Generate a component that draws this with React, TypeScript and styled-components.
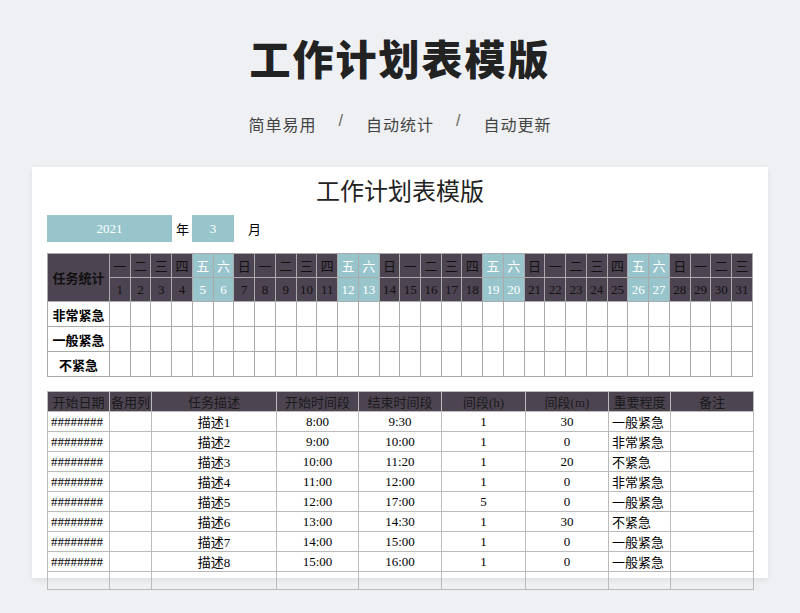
import React from "react";
import styled, { createGlobalStyle } from "styled-components";

const Global = createGlobalStyle`
  body { margin: 0; background: #eef0f3; font-family: "Liberation Sans", "Noto Sans CJK SC", sans-serif; }
`;

const Page = styled.div`
  width: 800px;
  height: 613px;
  display: flex;
  flex-direction: column;
  align-items: center;
  overflow: hidden;
`;

const Heading = styled.h1`
  margin: 36px 0 0;
  font-size: 41px;
  font-weight: 900;
  color: #222;
  letter-spacing: 2px;
  line-height: 50px;
`;

const Sub = styled.div`
  margin-top: 26px;
  display: flex;
  gap: 22px;
  font-size: 16px;
  color: #444;
  letter-spacing: 1px;
  span.sep { color: #666; }
`;

const Card = styled.div`
  margin-top: 31px;
  width: 736px;
  height: 411px;
  background: #fff;
  box-shadow: 0 2px 6px rgba(0, 0, 0, 0.08);
  padding: 0 15px;
  box-sizing: border-box;
  font-family: "Liberation Serif", "Noto Sans CJK SC", serif;
`;

const SheetTitle = styled.div`
  text-align: center;
  font-size: 24px;
  color: #222;
  height: 48px;
  line-height: 50px;
`;

const YearRow = styled.div`
  display: flex;
  align-items: center;
  height: 27px;
  font-size: 13px;
  margin-bottom: 11px;
`;

const Box = styled.div<{ $w: number }>`
  width: ${(p) => p.$w}px;
  height: 27px;
  background: #98c5cc;
  color: #fff;
  display: flex;
  align-items: center;
  justify-content: center;
  font-size: 13px;
`;

const Label = styled.span<{ $w: number }>`
  width: ${(p) => p.$w}px;
  padding-left: 4px;
  box-sizing: border-box;
`;

const Grid = styled.table`
  border-collapse: collapse;
  table-layout: fixed;
  width: 706px;
  font-size: 13px;
  td { border: 1px solid #aaa; padding: 0; text-align: center; }
`;

const DayCell = styled.td<{ $weekend: boolean }>`
  background: ${(p) => (p.$weekend ? "#98c5cc" : "#4d4452")};
  color: ${(p) => (p.$weekend ? "#fff" : "#111")};
  height: 23px;
  font-size: 13px;
`;

const StatHead = styled.td`
  background: #4d4452;
  font-size: 13px;
  font-weight: bold;
  color: #111;
`;

const RowLabel = styled.td`
  height: 24px;
  font-weight: bold;
  font-size: 13px;
`;

const Tasks = styled.table`
  margin-top: 14px;
  border-collapse: collapse;
  table-layout: fixed;
  width: 706px;
  font-size: 13px;
  td { border: 1px solid #bbb; padding: 0; height: 17px; text-align: center; white-space: nowrap; overflow: hidden; }
  td.l { text-align: left; padding-left: 3px; }
`;

const HeadCell = styled.td`
  background: #4d4452;
  color: #1a1a1a;
  font-size: 13px;
`;

const wk = ["一", "二", "三", "四", "五", "六", "日"];
const days = Array.from({ length: 31 }, (_, i) => i + 1);
const isWeekend = (d: number) => [5, 6].includes(((d - 1) % 7) + 1);

const cols = [62, 42, 125, 82, 83, 84, 83, 62, 83];
const heads = ["开始日期", "备用列", "任务描述", "开始时间段", "结束时间段", "间段(h)", "间段(m)", "重要程度", "备注"];
const rows = [
  ["描述1", "8:00", "9:30", "1", "30", "一般紧急"],
  ["描述2", "9:00", "10:00", "1", "0", "非常紧急"],
  ["描述3", "10:00", "11:20", "1", "20", "不紧急"],
  ["描述4", "11:00", "12:00", "1", "0", "非常紧急"],
  ["描述5", "12:00", "17:00", "5", "0", "一般紧急"],
  ["描述6", "13:00", "14:30", "1", "30", "不紧急"],
  ["描述7", "14:00", "15:00", "1", "0", "一般紧急"],
  ["描述8", "15:00", "16:00", "1", "0", "一般紧急"],
];

export default function App() {
  return (
    <Page>
      <Global />
      <Heading>工作计划表模版</Heading>
      <Sub>
        <span>简单易用</span><span className="sep">/</span>
        <span>自动统计</span><span className="sep">/</span>
        <span>自动更新</span>
      </Sub>
      <Card>
        <SheetTitle>工作计划表模版</SheetTitle>
        <YearRow>
          <Box $w={125}>2021</Box>
          <Label $w={20}>年</Label>
          <Box $w={42}>3</Box>
          <Label $w={30} style={{ paddingLeft: 14 }}>月</Label>
        </YearRow>
        <Grid>
          <colgroup>
            <col style={{ width: 62 }} />
            {days.map((d) => <col key={d} />)}
          </colgroup>
          <tbody>
            <tr>
              <StatHead rowSpan={2}>任务统计</StatHead>
              {days.map((d) => (
                <DayCell key={d} $weekend={isWeekend(d)}>{wk[(d - 1) % 7]}</DayCell>
              ))}
            </tr>
            <tr>
              {days.map((d) => (
                <DayCell key={d} $weekend={isWeekend(d)}>{d}</DayCell>
              ))}
            </tr>
            {["非常紧急", "一般紧急", "不紧急"].map((l) => (
              <tr key={l}>
                <RowLabel>{l}</RowLabel>
                {days.map((d) => <td key={d} />)}
              </tr>
            ))}
          </tbody>
        </Grid>
        <Tasks>
          <colgroup>
            {cols.map((w, i) => <col key={i} style={{ width: w }} />)}
          </colgroup>
          <tbody>
            <tr>{heads.map((h) => <HeadCell key={h}>{h}</HeadCell>)}</tr>
            {rows.map((r, i) => (
              <tr key={i}>
                <td className="l">########</td>
                <td />
                <td>{r[0]}</td>
                <td>{r[1]}</td>
                <td>{r[2]}</td>
                <td>{r[3]}</td>
                <td>{r[4]}</td>
                <td className="l">{r[5]}</td>
                <td />
              </tr>
            ))}
            <tr>{cols.map((_, i) => <td key={i} />)}</tr>
          </tbody>
        </Tasks>
      </Card>
    </Page>
  );
}
